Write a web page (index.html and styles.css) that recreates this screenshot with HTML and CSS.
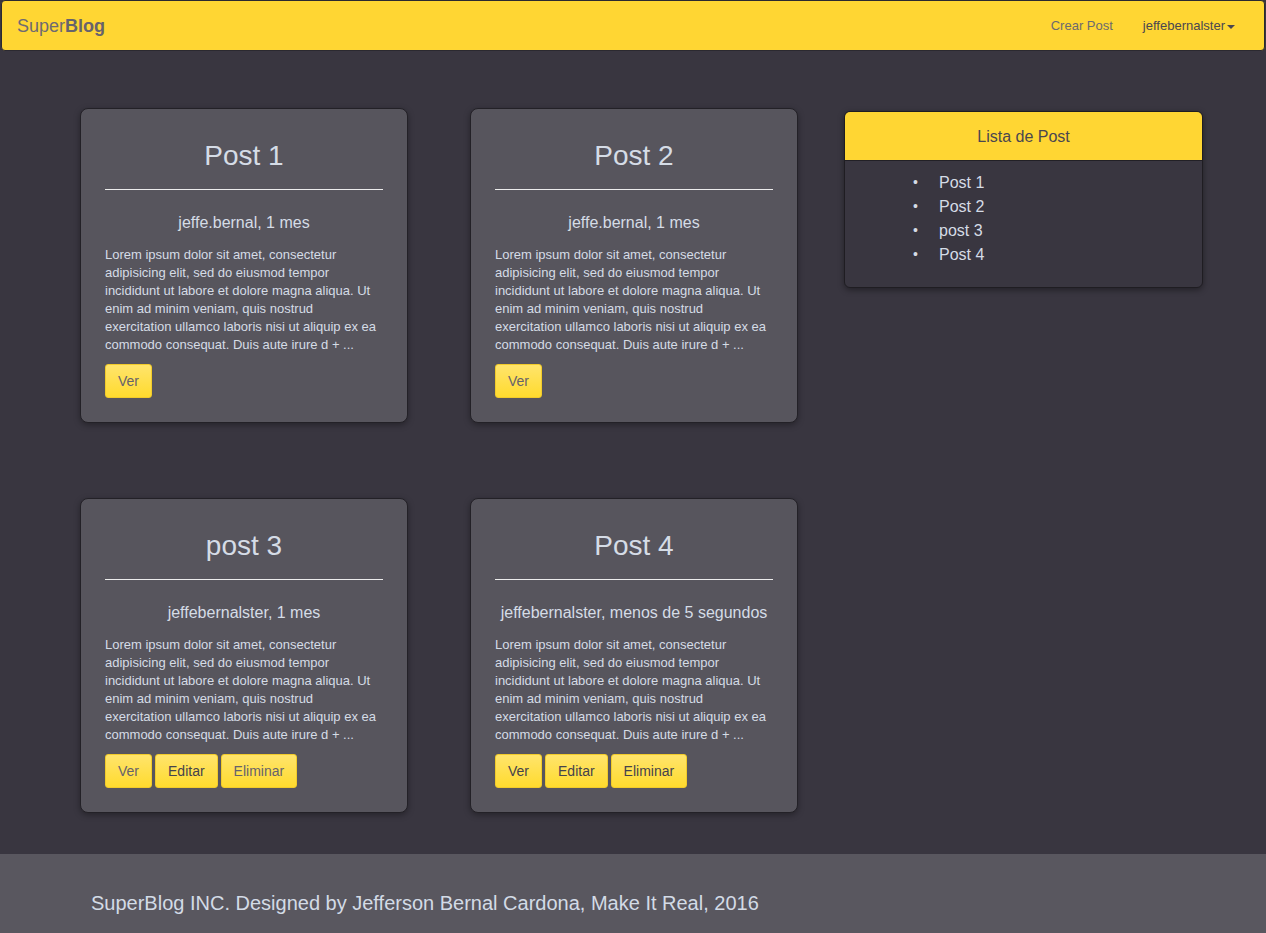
FILE: index.html
```html
<!DOCTYPE html>
<html lang="es">
<head>
<meta charset="utf-8">
<title>SuperBlog</title>
<link rel="stylesheet" href="styles.css">
</head>
<body>
<nav class="navbar">
  <a class="brand">Super<b>Blog</b></a>
  <div class="nav-right">
    <a class="nav-link">Crear Post</a>
    <a class="nav-link user">jeffebernalster<span class="caret"></span></a>
  </div>
</nav>

<main class="main">
  <section class="posts">
    <article class="card">
      <h2 class="card-title">Post 1</h2>
      <hr class="card-rule">
      <h4 class="card-meta">jeffe.bernal, 1 mes</h4>
      <p class="card-text">Lorem ipsum dolor sit amet, consectetur adipisicing elit, sed do eiusmod tempor incididunt ut labore et dolore magna aliqua. Ut enim ad minim veniam, quis nostrud exercitation ullamco laboris nisi ut aliquip ex ea commodo consequat. Duis aute irure d + ...</p>
      <div class="actions"><a class="btn light">Ver</a></div>
    </article>
    <article class="card">
      <h2 class="card-title">Post 2</h2>
      <hr class="card-rule">
      <h4 class="card-meta">jeffe.bernal, 1 mes</h4>
      <p class="card-text">Lorem ipsum dolor sit amet, consectetur adipisicing elit, sed do eiusmod tempor incididunt ut labore et dolore magna aliqua. Ut enim ad minim veniam, quis nostrud exercitation ullamco laboris nisi ut aliquip ex ea commodo consequat. Duis aute irure d + ...</p>
      <div class="actions"><a class="btn light">Ver</a></div>
    </article>
    <article class="card">
      <h2 class="card-title">post 3</h2>
      <hr class="card-rule">
      <h4 class="card-meta">jeffebernalster, 1 mes</h4>
      <p class="card-text">Lorem ipsum dolor sit amet, consectetur adipisicing elit, sed do eiusmod tempor incididunt ut labore et dolore magna aliqua. Ut enim ad minim veniam, quis nostrud exercitation ullamco laboris nisi ut aliquip ex ea commodo consequat. Duis aute irure d + ...</p>
      <div class="actions"><a class="btn light">Ver</a><a class="btn">Editar</a><a class="btn light">Eliminar</a></div>
    </article>
    <article class="card">
      <h2 class="card-title">Post 4</h2>
      <hr class="card-rule">
      <h4 class="card-meta">jeffebernalster, menos de 5 segundos</h4>
      <p class="card-text">Lorem ipsum dolor sit amet, consectetur adipisicing elit, sed do eiusmod tempor incididunt ut labore et dolore magna aliqua. Ut enim ad minim veniam, quis nostrud exercitation ullamco laboris nisi ut aliquip ex ea commodo consequat. Duis aute irure d + ...</p>
      <div class="actions"><a class="btn">Ver</a><a class="btn">Editar</a><a class="btn">Eliminar</a></div>
    </article>
  </section>

  <aside class="sidebar">
    <div class="sidebar-head">Lista de Post</div>
    <ul class="post-list">
      <li>Post 1</li>
      <li>Post 2</li>
      <li>post 3</li>
      <li>Post 4</li>
    </ul>
  </aside>
</main>

<footer class="footer">
  <p class="footer-text">SuperBlog INC. Designed by Jefferson Bernal Cardona, Make It Real, 2016</p>
</footer>
</body>
</html>
```

FILE: styles.css
```css
* { box-sizing: border-box; }

html, body {
  margin: 0;
  padding: 0;
}

body {
  background: #393640;
  font-family: "Liberation Sans", Arial, sans-serif;
  color: #d3dbe6;
  min-height: 933px;
}

.navbar {
  height: 51px;
  margin: 0 1px;
  background: #ffd633;
  border: 1px solid #2b2930;
  border-radius: 4px;
  display: flex;
  align-items: center;
  justify-content: space-between;
  padding: 0 15px;
}

.brand {
  font-size: 18px;
  color: #6e6a72;
  padding-top: 1px;
}

.brand b { font-weight: bold; color: #67636c; }

.nav-right {
  display: flex;
  align-items: center;
}

.nav-link {
  font-size: 13px;
  color: #6c6a6f;
  padding: 0 15px;
}

.nav-link.user { color: #4a4750; padding-right: 14px; }

.caret {
  display: inline-block;
  width: 0;
  height: 0;
  margin-left: 2px;
  vertical-align: middle;
  border-top: 4px solid #4a4750;
  border-left: 4px solid transparent;
  border-right: 4px solid transparent;
}

.main {
  width: 1140px;
  margin: 0 auto;
  padding: 57px 0 41px;
  display: flex;
  align-items: flex-start;
}

.posts {
  display: grid;
  grid-template-columns: 328px 328px;
  column-gap: 62px;
  row-gap: 75px;
  padding-left: 17px;
}

.card {
  background: #57555d;
  border: 1px solid #232127;
  border-radius: 8px;
  box-shadow: 0 2px 6px rgba(0, 0, 0, 0.35);
  padding: 30px 24px 24px;
}

.card-title {
  margin: 0;
  font-size: 28px;
  line-height: 33px;
  font-weight: normal;
  text-align: center;
  color: #d5dce6;
}

.card-rule {
  margin: 17px 0 0;
  border: 0;
  border-top: 1px solid #ececec;
}

.card-meta {
  margin: 22px 0 0;
  font-size: 16px;
  line-height: 22px;
  font-weight: normal;
  text-align: center;
  color: #d5dce6;
}

.card-text {
  margin: 12px 0 0;
  font-size: 13px;
  line-height: 18px;
  color: #d5dce6;
}

.actions {
  margin-top: 10px;
  display: flex;
  gap: 3px;
}

.btn {
  display: inline-block;
  padding: 6px 12px;
  font-size: 14px;
  line-height: 20px;
  color: #45424c;
  background: linear-gradient(#ffe46c, #ffdb2e);
  border: 1px solid #f2cb2a;
  border-radius: 3px;
}

.btn.light { color: #66626c; }

.sidebar {
  width: 359px;
  margin-left: 46px;
  margin-top: 3px;
  background: #393640;
  border: 1px solid #1f1d22;
  border-radius: 6px;
  box-shadow: 0 2px 6px rgba(0, 0, 0, 0.4);
  overflow: hidden;
}

.sidebar-head {
  background: #ffd633;
  height: 49px;
  border-bottom: 1px solid #222026;
  font-size: 16px;
  line-height: 49px;
  text-align: center;
  color: #4a4650;
}

.post-list {
  list-style: none;
  margin: 10px 0 0;
  padding: 0 0 20px 68px;
}

.post-list li {
  font-size: 16px;
  line-height: 24px;
  height: 24px;
  color: #d5dce6;
}

.post-list li::before {
  content: "\2022";
  display: inline-block;
  width: 26px;
  font-size: 14px;
  line-height: 0;
  vertical-align: 1px;
  color: #d5dce6;
}

.footer {
  background: #59575f;
  padding: 38px 0 30px;
}

.footer-text {
  width: 1140px;
  margin: 0 auto;
  padding-left: 28px;
  font-size: 20px;
  line-height: 22px;
  color: #d3dbe6;
}
```
